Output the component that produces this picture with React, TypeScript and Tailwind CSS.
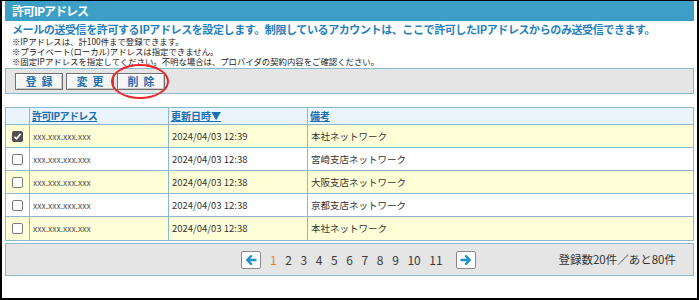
import React from "react";

const rows = [
  { checked: true, date: "2024/04/03 12:39", note: "本社ネットワーク", bg: "bg-[#ffffd7]" },
  { checked: false, date: "2024/04/03 12:38", note: "宮崎支店ネットワーク", bg: "bg-white" },
  { checked: false, date: "2024/04/03 12:38", note: "大阪支店ネットワーク", bg: "bg-[#ffffd7]" },
  { checked: false, date: "2024/04/03 12:38", note: "京都支店ネットワーク", bg: "bg-white" },
  { checked: false, date: "2024/04/03 12:38", note: "本社ネットワーク", bg: "bg-[#ffffd7]" },
];

function Btn({ label }: { label: string }) {
  return (
    <div className="w-[48px] h-[17px] flex items-center justify-center border border-[#6f6f6f] bg-[#f6f6f6] shadow-[inset_1px_1px_0_#ffffff,inset_-1px_-1px_0_#c8c8c8] text-[11px] font-bold text-[#1f6fae] tracking-[5px] pl-[5px] leading-none">
      {label}
    </div>
  );
}

function ArrowBtn({ dir }: { dir: "left" | "right" }) {
  return (
    <div className="w-[20px] h-[18px] flex items-center justify-center bg-white border border-[#8a8a8a] rounded-[2px]">
      <svg width="12" height="12" viewBox="0 0 12 12">
        {dir === "left" ? (
          <path d="M10.5 6H2.5M6 2.2L2.2 6L6 9.8" stroke="#1b95c9" strokeWidth="2.4" fill="none" strokeLinecap="round" strokeLinejoin="round" />
        ) : (
          <path d="M1.5 6H9.5M6 2.2L9.8 6L6 9.8" stroke="#1b95c9" strokeWidth="2.4" fill="none" strokeLinecap="round" strokeLinejoin="round" />
        )}
      </svg>
    </div>
  );
}

function Check({ checked }: { checked: boolean }) {
  return checked ? (
    <div className="w-[11px] h-[11px] rounded-[2px] bg-[#505050] flex items-center justify-center">
      <svg width="9" height="9" viewBox="0 0 9 9">
        <path d="M1.5 4.8L3.6 6.8L7.6 1.8" stroke="white" strokeWidth="1.6" fill="none" />
      </svg>
    </div>
  ) : (
    <div className="w-[11px] h-[11px] rounded-[2px] bg-white border border-[#7a7a7a]" />
  );
}

export default function App() {
  return (
    <div
      className="w-[699px] h-[300px] border-2 border-t border-black px-[3px] bg-white text-[#333]"
      style={{ fontFamily: '"Noto Sans CJK JP", "Noto Sans", sans-serif' }}
    >
      <div className="h-[20px] bg-[#3d9fc6] flex items-center pl-[7px] text-white text-[12px] font-bold tracking-[-1px] leading-none">
        許可IPアドレス
      </div>
      <div className="pl-[7px] pt-[1px]">
        <div className="text-[11px] font-bold text-[#1f7fc0] tracking-[-0.4px] leading-[14px] whitespace-nowrap">
          メールの送受信を許可するIPアドレスを設定します。制限しているアカウントは、ここで許可したIPアドレスからのみ送受信できます。
        </div>
        <div className="text-[8.4px] leading-[10px] text-[#222] whitespace-nowrap">
          <div>※IPアドレスは、計100件まで登録できます。</div>
          <div>※プライベート(ローカル)アドレスは指定できません。</div>
          <div>※固定IPアドレスを指定してください。不明な場合は、プロバイダの契約内容をご確認ください。</div>
        </div>
      </div>
      <div className="relative mt-[2px] h-[26px] border border-[#8cb8cf] bg-[#e5e5e5] flex items-center gap-[3px] pl-[9px]">
        <Btn label="登録" />
        <Btn label="変更" />
        <Btn label="削除" />
        <div className="absolute left-[105px] top-[-5px] w-[58px] h-[35px] rounded-[50%] border-2 border-[#e8262b]" />
      </div>
      <div className="mt-[13px] border border-[#8cb8cf]">
        <div className="grid grid-cols-[24px_139px_139px_1fr] h-[17px] bg-[#eaf4fc] border-b border-[#8cb8cf] text-[10px] font-bold text-[#1a6fb0] leading-none">
          <div className="border-r border-[#8cb8cf]" />
          <div className="border-r border-[#8cb8cf] flex items-center pl-[2px]">
            <span className="underline tracking-[-0.6px]">許可IPアドレス</span>
          </div>
          <div className="border-r border-[#8cb8cf] flex items-center pl-[2px]">
            <span className="underline">更新日時▼</span>
          </div>
          <div className="flex items-center pl-[2px]">
            <span className="underline">備考</span>
          </div>
        </div>
        {rows.map((r, i) => (
          <div
            key={i}
            className={`grid grid-cols-[24px_139px_139px_1fr] h-[23px] ${r.bg} ${i < rows.length - 1 ? "border-b border-[#8cb8cf]" : ""}`}
          >
            <div className="border-r border-[#8cb8cf] flex items-center justify-center pr-[1px]">
              <Check checked={r.checked} />
            </div>
            <div className="border-r border-[#8cb8cf] flex items-center pl-[3px] text-[8.5px] text-[#555]">
              xxx.xxx.xxx.xxx
            </div>
            <div className="border-r border-[#8cb8cf] flex items-center pl-[3px] text-[9.5px] text-[#333]">
              {r.date}
            </div>
            <div className="flex items-center pl-[3px] text-[9.5px] text-[#333]">{r.note}</div>
          </div>
        ))}
      </div>
      <div className="mt-[2px] h-[33px] border border-[#8cb8cf] bg-[#e5e5e5] flex items-center pl-[235px] pr-[17px]">
        <ArrowBtn dir="left" />
        <div className="flex items-center gap-[8.6px] ml-[9px] text-[12px] leading-none text-[#3a3a3a]">
          <span className="text-[#f07a1e]">1</span>
          {["2", "3", "4", "5", "6", "7", "8", "9", "10", "11"].map((n) => (
            <span key={n}>{n}</span>
          ))}
        </div>
        <div className="ml-[13px]">
          <ArrowBtn dir="right" />
        </div>
        <div className="ml-auto text-[11.5px] text-[#333] leading-none">登録数20件／あと80件</div>
      </div>
    </div>
  );
}
